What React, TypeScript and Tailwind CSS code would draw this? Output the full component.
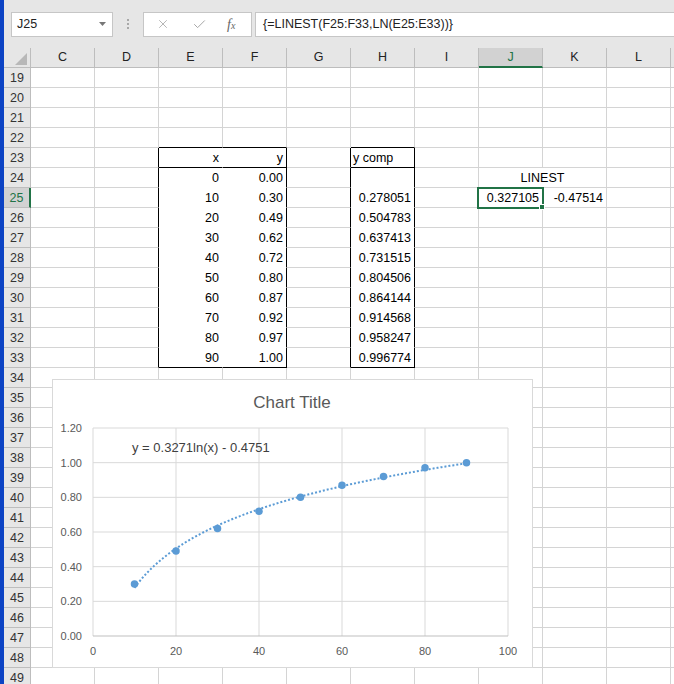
import React from 'react';
import { X, Check } from 'lucide-react';

const COLS = ['C', 'D', 'E', 'F', 'G', 'H', 'I', 'J', 'K', 'L'];
const ROWS = Array.from({ length: 31 }, (_, i) => 19 + i);

type Cell = { v: string; align?: 'left' | 'right' | 'center' };

const xs = ['0', '10', '20', '30', '40', '50', '60', '70', '80', '90'];
const ys = ['0.00', '0.30', '0.49', '0.62', '0.72', '0.80', '0.87', '0.92', '0.97', '1.00'];
const comps = ['', '0.278051', '0.504783', '0.637413', '0.731515', '0.804506', '0.864144', '0.914568', '0.958247', '0.996774'];

const cells: Record<string, Cell> = {
    E23: { v: 'x', align: 'right' },
    F23: { v: 'y', align: 'right' },
    H23: { v: 'y comp', align: 'left' },
    J24: { v: 'LINEST', align: 'center' },
    J25: { v: '0.327105', align: 'right' },
    K25: { v: '-0.47514', align: 'right' },
};
xs.forEach((x, i) => {
    cells['E' + (24 + i)] = { v: x, align: 'right' };
    cells['F' + (24 + i)] = { v: ys[i], align: 'right' };
    if (comps[i]) cells['H' + (24 + i)] = { v: comps[i], align: 'right' };
});

// boxed ranges E23:F33 and H23:H33 have white fill, so no gridlines inside
const inBox = (c: string, r: number) => (c === 'E' || c === 'F' || c === 'H') && r >= 23 && r <= 33;

function rightClass(c: string, r: number) {
    if (inBox(c, r)) return c === 'E' ? 'border-r-white' : 'border-r-black';
    if ((c === 'D' || c === 'G') && r >= 23 && r <= 33) return 'border-r-black';
    if (c === 'J' && r === 24) return 'border-r-white';
    return 'border-r-[#d4d4d4]';
}

function bottomClass(c: string, r: number) {
    if (inBox(c, r)) return r === 23 || r === 33 ? 'border-b-black' : 'border-b-white';
    if (inBox(c, r + 1)) return 'border-b-black';
    return 'border-b-[#d4d4d4]';
}

// chart maths, coordinates inside the chart border
const px = (x: number) => 40 + x * 4.15;
const py = (y: number) => 256 - y * (208 / 1.2);
const pts: [number, number][] = [
    [10, 0.3], [20, 0.49], [30, 0.62], [40, 0.72], [50, 0.8], [60, 0.87], [70, 0.92], [80, 0.97], [90, 1.0],
];
const trend = Array.from({ length: 81 }, (_, i) => {
    const x = 10 + i;
    const y = 0.3271 * Math.log(x) - 0.4751;
    return `${i === 0 ? 'M' : 'L'}${px(x).toFixed(2)} ${py(y).toFixed(2)}`;
}).join(' ');

function Chart() {
    return (
        <div className="absolute left-[52px] top-[379px] z-20 h-[289px] w-[481px] border border-[#d9d9d9] bg-white">
            <svg width="479" height="287" className="block font-['Liberation_Sans',sans-serif]">
                <text x="239" y="28" textAnchor="middle" fontSize="17" fill="#595959">Chart Title</text>
                {[0, 20, 40, 60, 80, 100].map((v) => (
                    <line key={'v' + v} x1={px(v)} x2={px(v)} y1={48} y2={256} stroke="#d9d9d9" strokeWidth="1" />
                ))}
                {[0.2, 0.4, 0.6, 0.8, 1.0, 1.2].map((v) => (
                    <line key={'h' + v} x1={40} x2={455} y1={py(v)} y2={py(v)} stroke="#d9d9d9" strokeWidth="1" />
                ))}
                <line x1={40} x2={455} y1={256} y2={256} stroke="#bfbfbf" strokeWidth="1" />
                {[0, 0.2, 0.4, 0.6, 0.8, 1.0, 1.2].map((v) => (
                    <text key={'yl' + v} x="29" y={py(v) + 4} textAnchor="end" fontSize="11" fill="#595959">
                        {v.toFixed(2)}
                    </text>
                ))}
                {[0, 20, 40, 60, 80, 100].map((v) => (
                    <text key={'xl' + v} x={px(v)} y="275" textAnchor="middle" fontSize="11" fill="#595959">
                        {v}
                    </text>
                ))}
                <path d={trend} fill="none" stroke="#5b9bd5" strokeWidth="2" strokeDasharray="2 2" />
                {pts.map(([x, y]) => (
                    <circle key={x} cx={px(x)} cy={py(y)} r="3.75" fill="#5b9bd5" />
                ))}
                <text x="79" y="71.5" fontSize="13" fill="#404040">y = 0.3271ln(x) - 0.4751</text>
            </svg>
        </div>
    );
}

function FormulaBar() {
    return (
        <div className="flex h-[48px] shrink-0 items-center pl-[7px]">
            <div className="flex h-[25px] w-[102px] items-center justify-between border border-[#c6c6c6] bg-white pl-[5px] pr-[6px] text-[12.5px] text-[#222]">
                <span>J25</span>
                <svg width="7" height="4" viewBox="0 0 7 4"><polygon points="0,0 7,0 3.5,4" fill="#777" /></svg>
            </div>
            <div className="flex w-[30px] flex-col items-center gap-[2px]">
                <span className="h-[2px] w-[2px] bg-[#a8a8a8]" />
                <span className="h-[2px] w-[2px] bg-[#a8a8a8]" />
                <span className="h-[2px] w-[2px] bg-[#a8a8a8]" />
            </div>
            <div className="flex h-[25px] w-[109px] items-center border border-[#c6c6c6] bg-white pl-[12px]">
                <X size={14} strokeWidth={1.4} className="text-[#a6a6a6]" />
                <Check size={15} strokeWidth={1.6} className="ml-[22px] text-[#a6a6a6]" />
                <span className="ml-[20px] font-['Liberation_Serif',serif] text-[14px] italic text-[#666]">
                    f<span className="text-[10px]">x</span>
                </span>
            </div>
            <div className="ml-[3px] flex h-[25px] flex-1 items-center border border-r-0 border-[#c6c6c6] bg-white pl-[7px] text-[12.5px] text-[#222]">
                {'{=LINEST(F25:F33,LN(E25:E33))}'}
            </div>
        </div>
    );
}

function HeaderRow() {
    return (
        <div className="flex h-[20px] shrink-0">
            <div className="flex h-[20px] w-[27px] shrink-0 items-end justify-end border-r border-b border-[#bdbdbd] pb-[2px] pr-[3px]">
                <svg width="12" height="12" viewBox="0 0 12 12"><polygon points="12,0 12,12 0,12" fill="#b8b8b8" /></svg>
            </div>
            {COLS.map((c) =>
                c === 'J' ? (
                    <div key={c} className="flex h-[20px] w-[64px] shrink-0 items-center justify-center border-r border-b-2 border-r-[#bdbdbd] border-b-[#217346] bg-[#d2d2d2] pt-[1px] text-[#217346]">
                        {c}
                    </div>
                ) : (
                    <div key={c} className="flex h-[20px] w-[64px] shrink-0 items-center justify-center border-r border-b border-[#bdbdbd] text-[#222]">
                        {c}
                    </div>
                ),
            )}
            <div className="h-[20px] flex-1 border-b border-[#bdbdbd]" />
        </div>
    );
}

function SheetRow({ r }: { r: number }) {
    const selected = r === 25;
    return (
        <div className="flex h-[20px] shrink-0">
            {selected ? (
                <div className="flex h-[20px] w-[27px] shrink-0 items-center justify-center border-r-2 border-b border-r-[#217346] border-b-[#bdbdbd] bg-[#d2d2d2] pt-[1px] text-[#217346]">
                    {r}
                </div>
            ) : (
                <div className="flex h-[20px] w-[27px] shrink-0 items-center justify-center border-r border-b border-[#bdbdbd] pt-[1px] text-[#333]">
                    {r}
                </div>
            )}
            <div className="flex flex-1 bg-white">
                {COLS.map((c) => {
                    if (r === 24 && c === 'K') return null;
                    const cell = cells[c + r];
                    const wide = r === 24 && c === 'J';
                    const justify =
                        cell?.align === 'right' ? 'justify-end pr-[3px]' : cell?.align === 'center' ? 'justify-center' : 'justify-start pl-[2px]';
                    return (
                        <div
                            key={c}
                            className={`relative flex h-[20px] shrink-0 items-center whitespace-nowrap border-r border-b pt-[2px] text-black ${wide ? 'w-[128px]' : 'w-[64px]'} ${justify} ${rightClass(wide ? 'K' : c, r)} ${bottomClass(c, r)}`}
                        >
                            {cell?.v}
                            {c === 'J' && r === 25 && (
                                <div className="absolute -left-[2px] -top-[1px] z-10 h-[22px] w-[67px] border-2 border-[#217346]">
                                    <div className="absolute left-[60px] top-[15px] h-[6px] w-[6px] border border-white bg-[#217346]" />
                                </div>
                            )}
                        </div>
                    );
                })}
                <div className="h-[20px] flex-1 border-b border-[#d4d4d4]" />
            </div>
        </div>
    );
}

export default function App() {
    return (
        <div className="relative flex h-[684px] w-[674px] overflow-hidden bg-[#e6e6e6] font-['Liberation_Sans',sans-serif] text-[12.5px]">
            <div className="w-[4px] shrink-0 bg-[#0c43c4]" />
            <div className="flex min-w-0 flex-1 flex-col">
                <FormulaBar />
                <HeaderRow />
                {ROWS.map((r) => (
                    <SheetRow key={r} r={r} />
                ))}
            </div>
            <Chart />
        </div>
    );
}
